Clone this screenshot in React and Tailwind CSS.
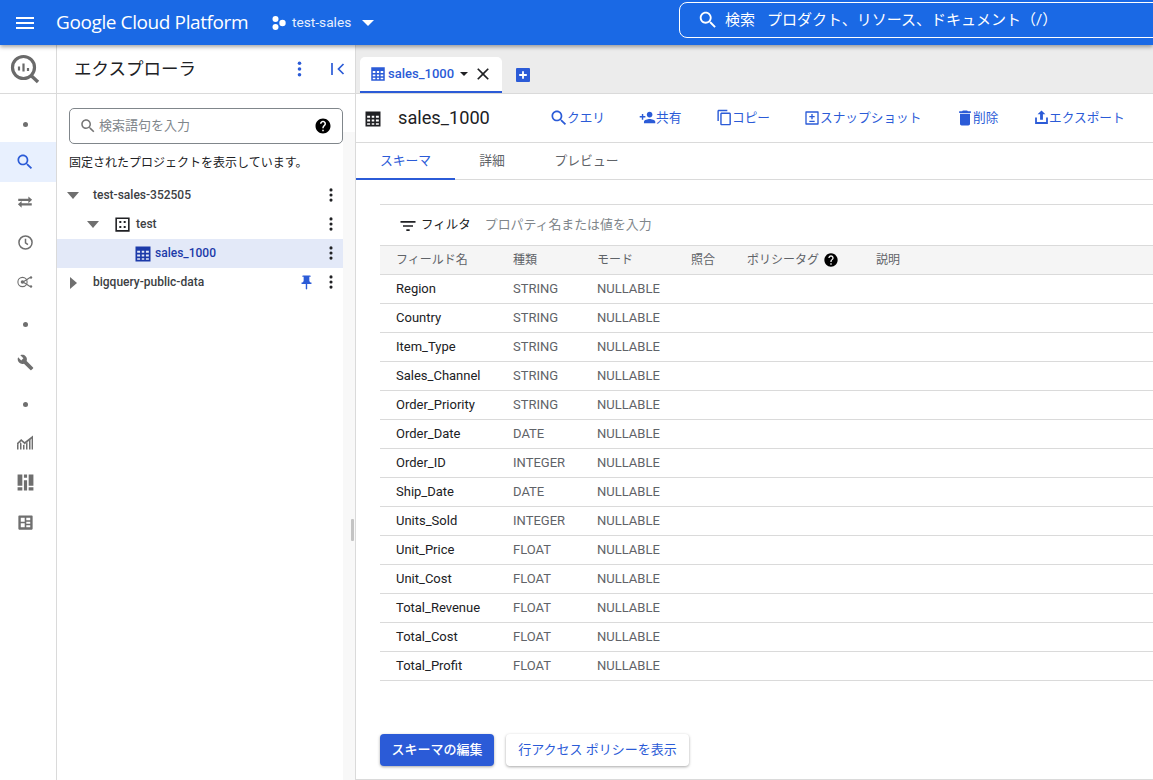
const FONT = "font-['Roboto','Noto_Sans_CJK_JP',sans-serif]";

const paths = {
  menu: "M3 18h18v-2H3v2zm0-5h18v-2H3v2zm0-7v2h18V6H3z",
  search:
    "M15.5 14h-.79l-.28-.27C15.41 12.59 16 11.11 16 9.5 16 5.91 13.09 3 9.5 3S3 5.91 3 9.5 5.91 16 9.5 16c1.61 0 3.09-.59 4.23-1.57l.27.28v.79l5 4.99L20.49 19l-4.99-5zm-6 0C7.01 14 5 11.99 5 9.5S7.01 5 9.5 5 14 7.01 14 9.5 11.99 14 9.5 14z",
  help:
    "M12 2C6.48 2 2 6.48 2 12s4.48 10 10 10 10-4.48 10-10S17.52 2 12 2zm1 17h-2v-2h2v2zm2.07-7.75l-.9.92C13.45 12.9 13 13.5 13 15h-2v-.5c0-1.1.45-2.1 1.17-2.83l1.24-1.26c.37-.36.59-.86.59-1.41 0-1.1-.9-2-2-2s-2 .9-2 2H8c0-2.21 1.79-4 4-4s4 1.79 4 4c0 .88-.36 1.68-.93 2.25z",
  swap: "M7.5 10.5L2.5 15l5 4.5v-3H21v-3H7.5v-3zM21.5 9l-5-4.5v3H3v3h13.5v3l5-4.5z",
  person:
    "M15 12c2.21 0 4-1.79 4-4s-1.79-4-4-4-4 1.79-4 4 1.79 4 4 4zm-9-2V7H4v3H1v2h3v3h2v-3h3v-2H6zm9 4c-2.67 0-8 1.34-8 4v2h16v-2c0-2.66-5.33-4-8-4z",
  copy:
    "M16 1H4c-1.1 0-2 .9-2 2v14h2V3h12V1zm3 4H8c-1.1 0-2 .9-2 2v14c0 1.1.9 2 2 2h11c1.1 0 2-.9 2-2V7c0-1.1-.9-2-2-2zm0 16H8V7h11v14z",
  snapshot:
    "M3 2h18a1 1 0 0 1 1 1v18a1 1 0 0 1-1 1H3a1 1 0 0 1-1-1V3a1 1 0 0 1 1-1zm1 2v16h16V4H4zm7 2h2v3h3v2h-3v3h-2v-3H8V9h3V6zm-3 10h8v2H8v-2z",
  trash:
    "M6 19c0 1.1.9 2 2 2h8c1.1 0 2-.9 2-2V7H6v12zM19 4h-3.5l-1-1h-5l-1 1H5v2h14V4z",
  upload: "M12 2l-5.5 5.5H10V15h4V7.5h3.5L12 2zM3 12v9h18v-9h-2.5v6.5h-13V12H3z",
  wrench:
    "M22.7 19l-9.1-9.1c.9-2.3.4-5-1.5-6.9-2-2-5-2.4-7.4-1.3L9 6 6 9 1.6 4.7C.4 7.1.9 10.1 2.9 12.1c1.9 1.9 4.6 2.4 6.9 1.5l9.1 9.1c.4.4 1 .4 1.4 0l2.3-2.3c.5-.4.5-1.1.1-1.4z",
  pin:
    "M16 9V4h1c.55 0 1-.45 1-1s-.45-1-1-1H7c-.55 0-1 .45-1 1s.45 1 1 1h1v5c0 1.66-1.34 3-3 3v2h5.97v7l1 1 1-1v-7H19v-2c-1.66 0-3-1.34-3-3z",
  filter: "M10 18h4v-2h-4v2zM3 6v2h18V6H3zm3 7h12v-2H6v2z",
  close:
    "M19 6.41L17.59 5 12 10.59 6.41 5 5 6.41 10.59 12 5 17.59 6.41 19 12 13.41 17.59 19 19 17.59 13.41 12z",
  table:
    "M3 3h18v18H3V3zm2 5v2.5h3.5V8H5zm5.5 0v2.5h3V8h-3zm5 0v2.5H19V8h-3.5zM5 12.5V15h3.5v-2.5H5zm5.5 0V15h3v-2.5h-3zm5 0V15H19v-2.5h-3.5zM5 17v2h3.5v-2H5zm5.5 0v2h3v-2h-3zm5 0v2H19v-2h-3.5z",
  dataset:
    "M3 3h18v18H3V3zm2 2v14h14V5H5zm3 2.5h2.5V10H8V7.5zm5.5 0H16V10h-2.5V7.5zM8 14h2.5v2.5H8V14zm5.5 0H16v2.5h-2.5V14z",
  dashboard:
    "M2 2h6v14H2V2zm0 16h6v4H2v-4zM10 2h4v4h-4V2zm0 7h4v13h-4V9zM16 2h6v14h-6V2zm0 16h6v4h-6v-4z",
  board:
    "M4 3h16a1 1 0 0 1 1 1v16a1 1 0 0 1-1 1H4a1 1 0 0 1-1-1V4a1 1 0 0 1 1-1zm2 3v5h5V6H6zm7 0v3h5V6h-5zm0 5v2.5h5V11h-5zm-7 2v5h5v-5H6zm7 2.5V18h5v-2.5h-5z",
};

function Icon({ name, className }) {
  return (
    <svg viewBox="0 0 24 24" className={className} fill="currentColor" fillRule="evenodd">
      <path d={paths[name]} />
    </svg>
  );
}

function MoreVert({ className }) {
  return (
    <svg viewBox="0 0 4 16" className={className} fill="currentColor">
      <circle cx="2" cy="2.2" r="1.8" />
      <circle cx="2" cy="8" r="1.8" />
      <circle cx="2" cy="13.8" r="1.8" />
    </svg>
  );
}

function Arrow({ open }) {
  return open ? (
    <svg viewBox="0 0 12 7" className="w-3 h-[7px] text-[#6f6f6f]" fill="currentColor">
      <path d="M0 0h12L6 7z" />
    </svg>
  ) : (
    <svg viewBox="0 0 7 12" className="w-[7px] h-3 text-[#6f6f6f]" fill="currentColor">
      <path d="M0 0v12l7-6z" />
    </svg>
  );
}

function BigQueryLogo() {
  return (
    <svg viewBox="0 0 30 30" className="w-[30px] h-[30px] text-[#6a6a6a]" fill="none" stroke="currentColor">
      <circle cx="13.5" cy="13.5" r="11" strokeWidth="3.2" />
      <path d="M20.5 21l7.5 7" strokeWidth="3.4" />
      <path d="M9 12.5v4M13.5 9.5v8M18 14v3" strokeWidth="2.2" />
    </svg>
  );
}

function Dot() {
  return (
    <svg viewBox="0 0 6 6" className="w-[5px] h-[5px] mt-1 text-[#6f6f6f]" fill="currentColor">
      <circle cx="3" cy="3" r="3" />
    </svg>
  );
}

function RailIcon({ children, active }) {
  return (
    <div className={`h-10 flex items-center justify-center pr-[6px] ${active ? "bg-[#e8f0fe]" : ""}`}>
      {children}
    </div>
  );
}

function LeftRail() {
  return (
    <div className="w-[57px] shrink-0 border-r border-[#dadada] flex flex-col text-[#6f6f6f]">
      <div className="h-[49px] shrink-0 border-b border-[#dadada] flex items-center justify-center pr-[6px]">
        <BigQueryLogo />
      </div>
      <div className="pt-2 flex flex-col">
        <RailIcon><Dot /></RailIcon>
        <RailIcon active>
          <Icon name="search" className="w-5 h-5 text-[#2b5bd7]" />
        </RailIcon>
        <RailIcon><Icon name="swap" className="w-[18px] h-[18px]" /></RailIcon>
        <RailIcon>
          <svg viewBox="0 0 16 16" className="w-[15px] h-[15px]" fill="none" stroke="currentColor">
            <circle cx="8" cy="8" r="7" strokeWidth="1.6" />
            <path d="M8 4v4.4l2.6 1.8" strokeWidth="1.6" />
          </svg>
        </RailIcon>
        <RailIcon>
          <svg viewBox="0 0 16 12" className="w-[16px] h-3" fill="none" stroke="currentColor">
            <circle cx="5.5" cy="6" r="4.6" strokeWidth="1.1" />
            <circle cx="5.5" cy="6" r="1.8" fill="currentColor" stroke="none" />
            <path d="M6 6l4-2.5L13 1.5M6 6l4 2.5 3 2" strokeWidth="1.2" />
            <circle cx="14" cy="1.5" r="1.2" fill="currentColor" stroke="none" />
            <circle cx="14" cy="10.5" r="1.2" fill="currentColor" stroke="none" />
          </svg>
        </RailIcon>
        <RailIcon><Dot /></RailIcon>
        <RailIcon><Icon name="wrench" className="w-[17px] h-[17px]" /></RailIcon>
        <RailIcon><Dot /></RailIcon>
        <RailIcon>
          <svg viewBox="0 0 16 14" className="w-4 h-[15px]" fill="currentColor">
            <path d="M0 14V9.5L1.5 8v6H0zm3 0V6.5l1.5 1.5v6H3zm3 0V9.5L7.5 9v5H6zm3 0V8l1.5-1.5V14H9zm3 0V5l1.5-1.5V14H12zm2.6 0V2.5l1.4-1V14h-1.4z" />
            <path d="M0 7.5L4.2 3.5 7.6 6.6 16 0v2.2L7.7 8.8 4.2 5.7 0 9.8z" />
          </svg>
        </RailIcon>
        <RailIcon><Icon name="dashboard" className="w-[19px] h-[19px]" /></RailIcon>
        <RailIcon><Icon name="board" className="w-[19px] h-[19px]" /></RailIcon>
      </div>
    </div>
  );
}

function TreeRow({ indent, arrow, icon, label, selected, pinned }) {
  return (
    <div className={`h-[29px] flex items-center ${selected ? "bg-[#e3e9f8]" : ""}`}>
      <div className={`flex items-center flex-1 ${indent}`}>
        {arrow}
        {icon}
        <span className={`text-xs font-medium pb-px ${selected ? "text-[#1c3aa9]" : "text-[#3c4043]"}`}>{label}</span>
      </div>
      {pinned && <Icon name="pin" className="w-[17px] h-[17px] text-[#2b5bd7] mr-[14px]" />}
      <MoreVert className="w-1 h-[14px] text-[#202124] mr-[10px] mb-px" />
    </div>
  );
}

function Explorer() {
  return (
    <div className="w-[299px] shrink-0 border-r border-[#dadada] flex flex-col">
      <div className="h-[49px] shrink-0 border-b border-[#dadada] flex items-center pl-[17px] pr-[10px]">
        <span className="text-[17.5px] text-[#202124] flex-1">エクスプローラ</span>
        <MoreVert className="w-[5px] h-[16px] text-[#2b5bd7] mr-[29px]" />
        <svg viewBox="0 0 14 12" className="w-[14px] h-3 text-[#2b5bd7]" fill="none" stroke="currentColor" strokeWidth="1.7">
          <path d="M1 0v12M12.5 1L7.5 6l5 5" />
        </svg>
      </div>
      <div className="flex-1 flex min-h-0">
        <div className="w-[286px] shrink-0 flex flex-col">
          <div className="pt-[14px] pl-3">
            <div className="w-[274px] h-9 border border-[#80868b] rounded-[5px] flex items-center pl-[9px] pr-[10px]">
              <Icon name="search" className="w-[18px] h-[18px] text-[#757575] mr-[2px]" />
              <span className="text-[13px] text-[#80868b] flex-1 pb-px">検索語句を入力</span>
              <Icon name="help" className="w-[18px] h-[18px] text-black" />
            </div>
            <p className="text-xs text-[#202124] mt-[9px] h-[20px] leading-5">固定されたプロジェクトを表示しています。</p>
          </div>
          <div className="mt-2">
            <TreeRow indent="pl-[10px]" label="test-sales-352505" arrow={<span className="w-[26px]"><Arrow open /></span>} />
            <TreeRow
              indent="pl-[30px]"
              label="test"
              arrow={<span className="w-[27px]"><Arrow open /></span>}
              icon={<Icon name="dataset" className="w-[19px] h-[19px] text-[#202124] mr-[4px] -ml-[1px]" />}
            />
            <TreeRow
              selected
              indent="pl-[76px]"
              label="sales_1000"
              icon={<Icon name="table" className="w-5 h-5 text-[#1c3aa9] mr-[2px]" />}
            />
            <TreeRow pinned indent="pl-[13px]" label="bigquery-public-data" arrow={<span className="w-[23px]"><Arrow /></span>} />
          </div>
        </div>
        <div className="flex-1 bg-[#f8f8f8] mt-[38px] flex items-center justify-end pr-[1px]">
          <div className="w-[3px] h-[22px] bg-[#c4c4c4] rounded-[1px] mt-[147px]" />
        </div>
      </div>
    </div>
  );
}

const ACTIONS = [
  ["search", "クエリ", "w-[88px]", "w-5 h-5 -ml-[2px] -mr-[2px]"],
  ["person", "共有", "w-[78px]", "w-[17px] h-[17px]"],
  ["copy", "コピー", "w-[88px]", "w-[17px] h-[17px] -ml-px -mr-px"],
  ["snapshot", "スナップショット", "w-[153px]", "w-[16px] h-[16px] -ml-px"],
  ["trash", "削除", "w-[76px]", "w-5 h-5 -ml-[3px] -mr-[2px]"],
  ["upload", "エクスポート", "w-[110px]", "w-[17px] h-[17px] -ml-[1px] -mr-px"],
];

const FIELDS = [
  ["Region", "STRING"],
  ["Country", "STRING"],
  ["Item_Type", "STRING"],
  ["Sales_Channel", "STRING"],
  ["Order_Priority", "STRING"],
  ["Order_Date", "DATE"],
  ["Order_ID", "INTEGER"],
  ["Ship_Date", "DATE"],
  ["Units_Sold", "INTEGER"],
  ["Unit_Price", "FLOAT"],
  ["Unit_Cost", "FLOAT"],
  ["Total_Revenue", "FLOAT"],
  ["Total_Cost", "FLOAT"],
  ["Total_Profit", "FLOAT"],
];

const COLS = "grid grid-cols-[117px_84px_94px_56px_129px_1fr] pl-4 items-center";

function Main() {
  return (
    <div className="flex-1 min-w-0 flex flex-col border-b border-[#dadada]">
      <div className="h-[49px] shrink-0 bg-[#ececec] border-b border-[#dadada] flex items-end pl-1">
        <div className="w-[142px] h-9 bg-white rounded-t-[5px] border-b-2 border-[#2b5bd7] flex items-center pl-[9px]">
          <Icon name="table" className="w-[18px] h-[18px] text-[#2b5bd7] mr-[1px]" />
          <span className="text-[13px] font-medium text-[#2b5bd7]">sales_1000</span>
          <svg viewBox="0 0 8 4" className="w-2 h-1 ml-[6px] text-[#202124]" fill="currentColor">
            <path d="M0 0h8L4 4z" />
          </svg>
          <Icon name="close" className="w-5 h-5 text-[#202124] ml-[5px]" />
        </div>
        <div className="h-9 flex items-center ml-[14px]">
          <svg viewBox="0 0 14 14" className="w-[14px] h-[14px] text-[#2b5bd7]">
            <rect width="14" height="14" rx="1" fill="currentColor" />
            <path d="M7 3.2v7.6M3.2 7h7.6" stroke="#fff" strokeWidth="1.8" />
          </svg>
        </div>
      </div>

      <div className="h-[49px] shrink-0 border-b border-[#dadada] flex items-center pl-[7px]">
        <Icon name="table" className="w-5 h-5 text-[#202124] mr-[15px] mt-[1px]" />
        <span className="text-[18.2px] text-[#202124] w-[153px]">sales_1000</span>
        {ACTIONS.map(([icon, label, width, size]) => (
          <div key={label} className={`${width} shrink-0 flex items-center text-[#2b5bd7]`}>
            <Icon name={icon} className={size} />
            <span className="text-[12.7px] whitespace-nowrap">{label}</span>
          </div>
        ))}
      </div>

      <div className="h-[37px] shrink-0 border-b border-[#dadada] flex text-[12.8px] text-[#5f6368]">
        <div className="w-[99px] flex items-center justify-center border-b-2 border-[#2b5bd7] -mb-px text-[#2b5bd7]">スキーマ</div>
        <div className="w-[74px] flex items-center justify-center">詳細</div>
        <div className="w-[115px] flex items-center justify-center">プレビュー</div>
      </div>

      <div className="flex-1 flex flex-col pl-6 pt-6">
        <div className="h-[41px] shrink-0 border-t border-[#dadada] flex items-center pl-[18px]">
          <Icon name="filter" className="w-5 h-5 text-[#202124] mr-[3px] mt-[1px]" />
          <span className="text-[12.5px] text-[#202124] mr-[14px]">フィルタ</span>
          <span className="text-[12.9px] text-[#80868b]">プロパティ名または値を入力</span>
        </div>
        <div className={`${COLS} h-[30px] shrink-0 bg-[#f5f5f5] border-y border-[#dadada] text-xs text-[#5f6368]`}>
          <span>フィールド名</span>
          <span>種類</span>
          <span>モード</span>
          <span>照合</span>
          <span className="flex items-center">
            ポリシータグ
            <Icon name="help" className="w-4 h-4 text-black ml-1" />
          </span>
          <span>説明</span>
        </div>
        {FIELDS.map(([name, type]) => (
          <div key={name} className={`${COLS} h-[29px] shrink-0 border-b border-[#dadada] text-[13px]`}>
            <span className="text-[#202124]">{name}</span>
            <span className="text-[#5f6368]">{type}</span>
            <span className="text-[#5f6368]">NULLABLE</span>
          </div>
        ))}
        <div className="flex gap-3 mt-[53px]">
          <button className="w-[114px] h-8 rounded-[4px] bg-[#2b5bd7] text-white text-[13px] font-medium shadow-[0_1px_3px_rgba(0,0,0,0.35)]">
            スキーマの編集
          </button>
          <button className="w-[183px] h-8 rounded-[4px] bg-white text-[#2b5bd7] text-[13px] shadow-[0_1px_3px_rgba(0,0,0,0.35)]">
            行アクセス ポリシーを表示
          </button>
        </div>
      </div>
    </div>
  );
}

export default function App() {
  return (
    <div className={`${FONT} h-screen w-full overflow-hidden flex flex-col bg-white`}>
      <header className="h-[45px] shrink-0 bg-[#1a69e5] text-white flex items-center shadow-[0_2px_4px_rgba(0,0,0,0.35)] relative z-10 overflow-hidden">
        <Icon name="menu" className="w-6 h-6 ml-[13px] mr-[19px] shrink-0" />
        <span className="text-[19px] font-['Open_Sans',sans-serif] w-[216px] shrink-0 whitespace-nowrap tracking-[-0.4px]">Google Cloud Platform</span>
        <svg viewBox="0 0 14 14" className="w-[14px] h-[14px] mr-[6px] shrink-0" fill="currentColor">
          <circle cx="3.5" cy="3" r="3" />
          <circle cx="3.5" cy="11" r="3" />
          <circle cx="10.5" cy="7" r="3.2" />
        </svg>
        <span className="text-[13.7px] w-[70px] shrink-0 text-white/90">test-sales</span>
        <svg viewBox="0 0 12 6" className="w-3 h-[6px] shrink-0" fill="currentColor">
          <path d="M0 0h12L6 6z" />
        </svg>
        <div className="ml-[305px] w-[500px] h-9 shrink-0 border border-white rounded-lg flex items-center pl-[17px] -mt-[5px] text-[15px]">
          <Icon name="search" className="w-[22px] h-[22px] mr-[6px]" />
          <span className="mr-3">検索</span>
          <span>プロダクト、リソース、ドキュメント（/）</span>
        </div>
      </header>
      <div className="flex-1 min-h-0 flex">
        <LeftRail />
        <Explorer />
        <Main />
      </div>
    </div>
  );
}
